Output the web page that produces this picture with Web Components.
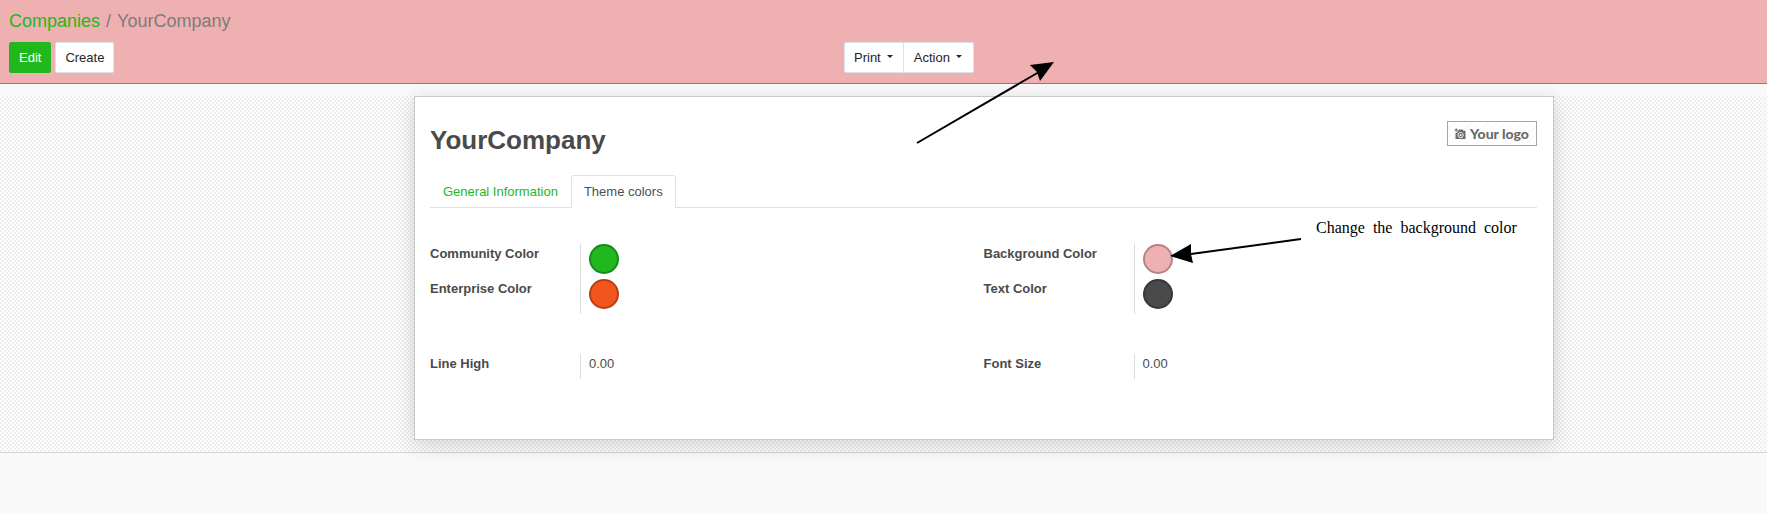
<!DOCTYPE html>
<html lang="en">
<head>
<meta charset="utf-8">
<title>YourCompany</title>
<style>
  body { margin: 0; min-height: 100vh; background: #f9f9f9; color: #4a4a4a; font: 13px/20px "Liberation Sans", Arial, sans-serif; --brand: #21b81f; }
</style>
</head>
<body>
<company-page></company-page>

<script>
const define = (name, html, setup) => {
  const template = document.createElement('template');
  template.innerHTML = '<style>*{box-sizing:border-box}:host{display:block}</style>' + html;
  customElements.define(name, class extends HTMLElement {
    constructor() {
      super();
      this.attachShadow({ mode: 'open' }).append(template.content.cloneNode(true));
      if (setup) setup(this, this.shadowRoot);
    }
  });
};

define('ui-button', `
  <style>
    :host { display: inline-flex; }
    button { font: inherit; line-height: 19px; color: #212529; background: #fff; border: 1px solid #dee2e6; border-radius: 2px; padding: 5px 9px; display: flex; align-items: center; }
    :host([primary]) button { color: #fff; background: var(--brand); border-color: var(--brand); }
    :host([first]) button { border-radius: 2px 0 0 2px; padding-right: 8px; }
    :host([last]) button { border-radius: 0 2px 2px 0; margin-left: -1px; padding-left: 10px; }
    i { display: none; margin: 0 2px 3px 6px; border: 3px solid transparent; border-top-color: currentColor; border-bottom: 0; }
    :host([dropdown]) i { display: block; }
  </style>
  <button type="button"><slot></slot><i></i></button>`);

define('control-panel', `
  <style>
    :host { background: #eeb0b1; border-bottom: 1px solid #d0605e; padding: 8px 8px 10px; }
    nav { font-size: 18px; line-height: 26px; color: #7c7c7c; display: flex; gap: 6px; padding-left: 1px; }
    a { color: var(--brand); text-decoration: none; }
    .bar { display: grid; grid-template-columns: 835fr 915fr; margin-top: 8px; padding-left: 1px; }
    .left { display: flex; gap: 4px; }
    .right { display: flex; }
  </style>
  <nav aria-label="Breadcrumb"><a href="#companies">Companies</a><span>/</span><span>YourCompany</span></nav>
  <div class="bar">
    <div class="left"><ui-button primary>Edit</ui-button><ui-button>Create</ui-button></div>
    <div class="right"><ui-button dropdown first>Print</ui-button><ui-button dropdown last>Action</ui-button></div>
  </div>`);

define('company-logo', `
  <style>
    :host { flex: none; }
    button { display: flex; align-items: center; gap: 4px; width: 90px; height: 25px; padding: 0 6px; border: 1px solid #a5a5a5; color: #6b6b6b; background: repeating-linear-gradient(135deg, #fff 0 4px, #fafafa 4px 6px); font: 900 14px/20px Lato, sans-serif; white-space: nowrap; }
    svg { flex: none; }
  </style>
  <button type="button">
    <svg width="12" height="12" viewBox="0 0 12 12" aria-hidden="true">
      <path fill="#6b6b6b" fill-rule="evenodd" d="M1.700.2h1v1.300H4v1H2.700v1.300h-1V2.500H.4v-1h1.300zM5 1.500h3.600l.9 1.300h2V11H1.500V4.700h2V2.800h.8zM6.600 3.900a3 3 0 1 0 .01 0z"/>
      <circle cx="6.600" cy="6.900" r="1.600" fill="none" stroke="#6b6b6b" stroke-width="1.200"/>
    </svg>
    <span>Your logo</span>
  </button>`);

define('tab-bar', `
  <style>
    nav { display: flex; border-bottom: 1px solid #dee2e6; }
    a { color: var(--brand); text-decoration: none; padding: 6px 12px 5px; line-height: 20px; border: 1px solid transparent; border-bottom: 0; border-radius: 3px 3px 0 0; }
    a[aria-current] { color: #495057; background: #fff; border-color: #dee2e6; margin-bottom: -1px; padding-bottom: 6px; }
  </style>
  <nav><a href="#general">General Information</a><a href="#theme" aria-current="page">Theme colors</a></nav>`);

define('field-group', `
  <style>:host { display: grid; grid-template-columns: 1fr 1fr; }</style><slot></slot>`);

define('form-field', `
  <style>
    :host { display: grid; grid-template-columns: 150px 1fr; }
    label { font-weight: bold; line-height: 19px; }
    .cell { border-left: 1px solid #dcdcdc; padding-left: 8px; min-height: 25px; }
    output { line-height: 19px; }
    input { display: block; appearance: none; width: 30px; height: 30px; margin: 0 0 5px; padding: 0; border: 0; background: none; }
    input::-webkit-color-swatch-wrapper { padding: 0; }
    input::-webkit-color-swatch { border: 2px solid rgba(0,0,0,.25); border-radius: 50%; background-clip: border-box; }
  </style>
  <label for="value"></label><div class="cell"></div>`,
  (host, root) => {
    const color = host.getAttribute('color');
    root.querySelector('label').textContent = host.getAttribute('label');
    const el = document.createElement(color ? 'input' : 'output');
    el.id = 'value';
    if (color) { el.type = 'color'; el.value = color; }
    else el.textContent = host.getAttribute('value');
    root.querySelector('.cell').append(el);
  });

define('note-layer', `
  <style>
    :host { position: absolute; inset: 0; pointer-events: none; color: #000; }
    svg { position: absolute; left: 0; top: 0; overflow: visible; }
    p { position: absolute; left: 901px; top: 121px; margin: 0; font: 16px/20px "Liberation Serif", serif; white-space: pre; }
  </style>
  <svg width="1138" height="342" aria-hidden="true">
    <path fill="none" stroke="#000" stroke-width="2" d="M502 46L624-25M886 142L776 157"/>
    <path d="M639-35L615-32L622-25L625-16ZM755 159L776 147V157L778 166Z"/>
  </svg>
  <p>Change  the  background  color</p>`);

define('form-sheet', `
  <style>
    :host { position: relative; background: #fff; border: 1px solid #c8c8d3; box-shadow: 0 5px 20px rgba(0,0,0,.16); padding: 24px 16px 60px 15px; }
    header { display: flex; justify-content: space-between; align-items: flex-start; margin-bottom: 20px; }
    h1 { margin: 4px 0 0; font-size: 26px; line-height: 30px; }
    field-group { margin-top: 36px; }
    field-group + field-group { margin-top: 40px; }
  </style>
  <header><h1>YourCompany</h1><company-logo></company-logo></header>
  <tab-bar></tab-bar>
  <field-group>
    <form-field label="Community Color" color="#21b81f"></form-field>
    <form-field label="Background Color" color="#eeb0b1"></form-field>
    <form-field label="Enterprise Color" color="#f2551d"></form-field>
    <form-field label="Text Color" color="#4a4a4a"></form-field>
  </field-group>
  <field-group>
    <form-field label="Line High" value="0.00"></form-field>
    <form-field label="Font Size" value="0.00"></form-field>
  </field-group>
  <note-layer></note-layer>`);

define('company-page', `
  <style>
    main { margin-top: 12px; display: grid; grid-template-columns: 414fr minmax(0, 1140px) 213fr; padding-bottom: 12px; border-bottom: 1px solid #d6d6d6; background: repeating-conic-gradient(#ededed 0 25%, #fff 0 50%) 0 0 / 4px 4px; }
    form-sheet { grid-column: 2; }
  </style>
  <control-panel></control-panel>
  <main><form-sheet></form-sheet></main>`);
</script>
</body>
</html>
